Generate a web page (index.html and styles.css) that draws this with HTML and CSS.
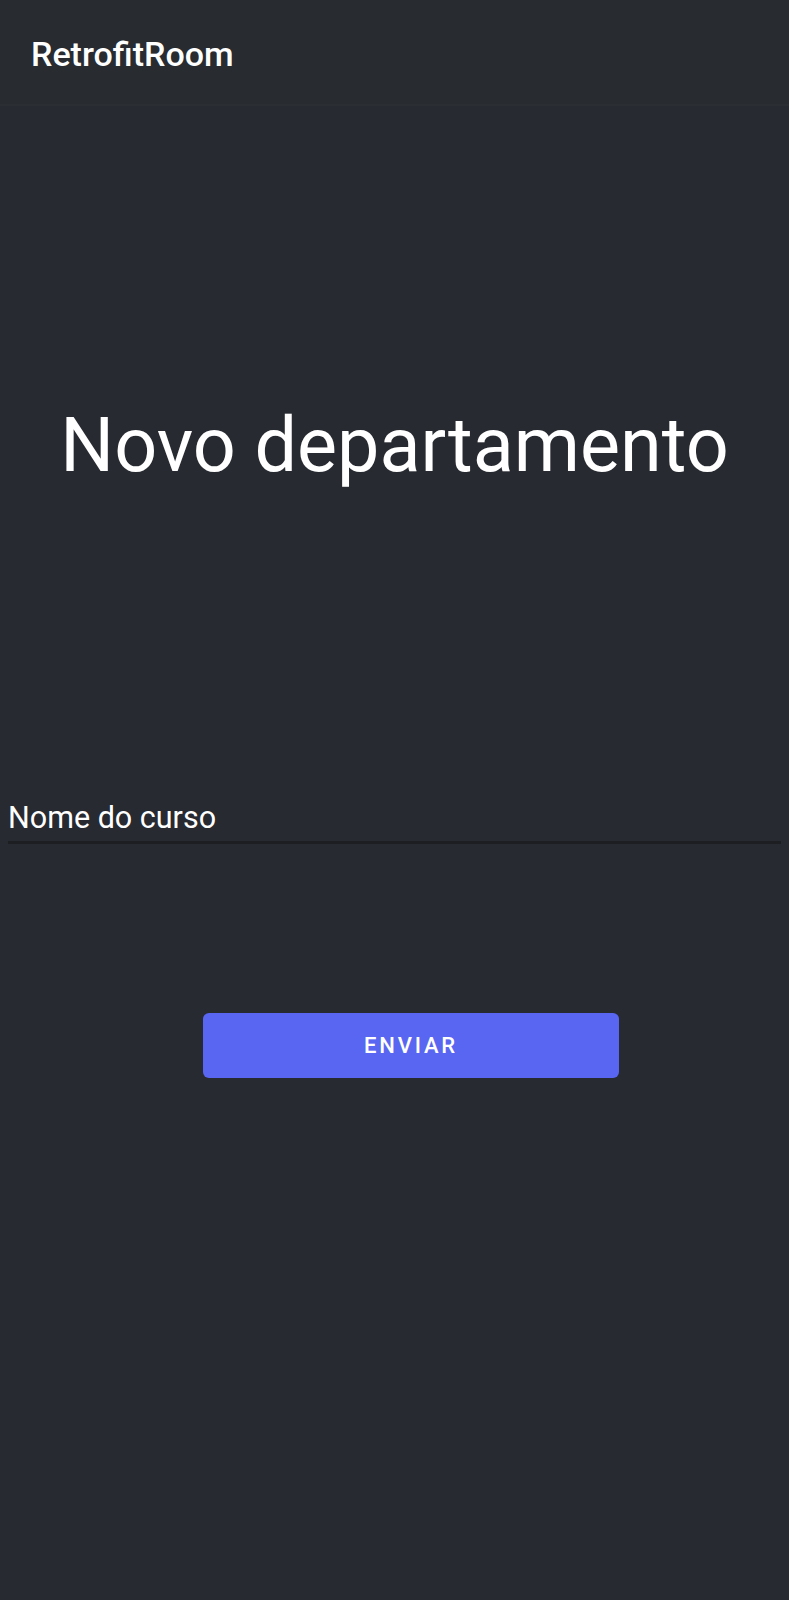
FILE: index.html
```html
<!DOCTYPE html>
<html lang="pt">
<head>
<meta charset="utf-8">
<title>RetrofitRoom</title>
<link rel="stylesheet" href="styles.css">
</head>
<body>
<header class="appbar">
  <span class="appbar-title">RetrofitRoom</span>
</header>
<main class="content">
  <h1 class="heading">Novo departamento</h1>
  <div class="field">
    <span class="field-label">Nome do curso</span>
  </div>
  <div class="actions">
    <button class="btn" type="button">ENVIAR</button>
  </div>
</main>
</body>
</html>
```

FILE: styles.css
```css
html, body {
  margin: 0;
  padding: 0;
}
body {
  background: #272a30;
  color: #ffffff;
  font-family: Roboto, "Noto Sans", sans-serif;
  width: 789px;
  min-height: 1600px;
}
.appbar {
  height: 106px;
  box-sizing: border-box;
  padding-left: 31px;
  padding-top: 3px;
  display: flex;
  align-items: center;
  background: #282b30;
  border-bottom: 2px solid #2b2e33;
}
.appbar-title {
  font-size: 34px;
  font-weight: 500;
  letter-spacing: 0;
  color: #ffffff;
}
.content {
  display: flex;
  flex-direction: column;
}
.heading {
  margin: 0;
  padding-top: 292px;
  font-size: 75.5px;
  font-weight: 400;
  line-height: 94px;
  text-align: center;
  color: #ffffff;
}
.field {
  margin: 308px 8px 0 8px;
  border-bottom: 3px solid #1c1e22;
  padding-bottom: 5px;
}
.field-label {
  display: block;
  font-size: 30.5px;
  line-height: 36px;
  color: #ffffff;
}
.actions {
  display: flex;
  padding-left: 203px;
  margin-top: 169px;
}
.btn {
  width: 416px;
  height: 65px;
  border: none;
  border-radius: 6px;
  background: #5966f1;
  color: #ffffff;
  font-family: Roboto, sans-serif;
  font-size: 22px;
  font-weight: 500;
  letter-spacing: 2.8px;
  cursor: pointer;
}
```
